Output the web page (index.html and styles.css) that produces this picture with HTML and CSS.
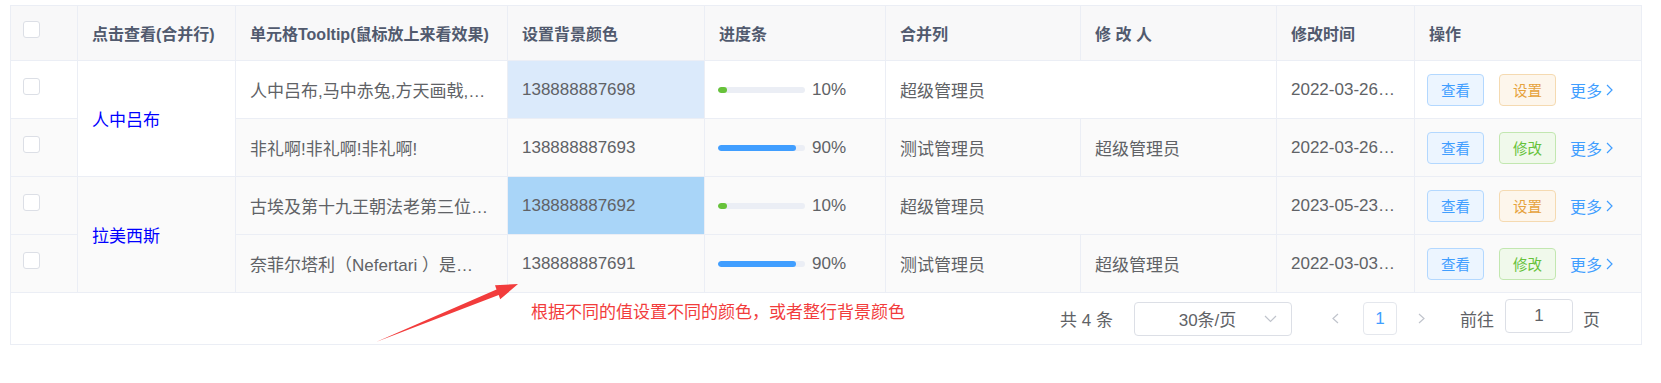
FILE: index.html
```html
<!DOCTYPE html>
<html lang="zh-CN">
<head>
<meta charset="utf-8">
<title>表格示例</title>
<link rel="stylesheet" href="styles.css">
</head>
<body>
<div class="page">
  <div class="panel">
    <table class="grid">
      <colgroup>
        <col class="c-sel"><col class="c-name"><col class="c-tip"><col class="c-bg"><col class="c-prog"><col class="c-merge"><col class="c-editor"><col class="c-time"><col class="c-ops">
      </colgroup>
      <thead>
        <tr>
          <th class="sel"><span class="checkbox"></span></th>
          <th>点击查看(合并行)</th>
          <th>单元格Tooltip(鼠标放上来看效果)</th>
          <th>设置背景颜色</th>
          <th>进度条</th>
          <th>合并列</th>
          <th>修 改 人</th>
          <th>修改时间</th>
          <th>操作</th>
        </tr>
      </thead>
      <tbody>
        <tr class="row-plain">
          <td class="sel"><span class="checkbox"></span></td>
          <td rowspan="2" class="name">人中吕布</td>
          <td><div class="clip">人中吕布,马中赤兔,方天画戟,…</div></td>
          <td class="bg-light">138888887698</td>
          <td class="prog-cell"><div class="progress"><span class="track"><span class="fill fill-green" style="width:10%"></span></span><span class="pct">10%</span></div></td>
          <td colspan="2">超级管理员</td>
          <td><div class="clip">2022-03-26…</div></td>
          <td class="ops-cell"><div class="ops"><span class="btn btn-view">查看</span><span class="btn btn-set">设置</span><span class="more">更多<svg class="chev" width="7" height="12" viewBox="0 0 7 12"><polyline points="1,1 6,6 1,11" fill="none" stroke="#409eff" stroke-width="1.2"/></svg></span></div></td>
        </tr>
        <tr class="row-stripe">
          <td class="sel"><span class="checkbox"></span></td>
          <td><div class="clip">非礼啊!非礼啊!非礼啊!</div></td>
          <td>138888887693</td>
          <td class="prog-cell"><div class="progress"><span class="track"><span class="fill fill-blue" style="width:90%"></span></span><span class="pct">90%</span></div></td>
          <td>测试管理员</td>
          <td>超级管理员</td>
          <td><div class="clip">2022-03-26…</div></td>
          <td class="ops-cell"><div class="ops"><span class="btn btn-view">查看</span><span class="btn btn-edit">修改</span><span class="more">更多<svg class="chev" width="7" height="12" viewBox="0 0 7 12"><polyline points="1,1 6,6 1,11" fill="none" stroke="#409eff" stroke-width="1.2"/></svg></span></div></td>
        </tr>
        <tr class="row-stripe">
          <td class="sel"><span class="checkbox"></span></td>
          <td rowspan="2" class="name">拉美西斯</td>
          <td><div class="clip">古埃及第十九王朝法老第三位…</div></td>
          <td class="bg-strong">138888887692</td>
          <td class="prog-cell"><div class="progress"><span class="track"><span class="fill fill-green" style="width:10%"></span></span><span class="pct">10%</span></div></td>
          <td colspan="2">超级管理员</td>
          <td><div class="clip">2023-05-23…</div></td>
          <td class="ops-cell"><div class="ops"><span class="btn btn-view">查看</span><span class="btn btn-set">设置</span><span class="more">更多<svg class="chev" width="7" height="12" viewBox="0 0 7 12"><polyline points="1,1 6,6 1,11" fill="none" stroke="#409eff" stroke-width="1.2"/></svg></span></div></td>
        </tr>
        <tr class="row-stripe">
          <td class="sel"><span class="checkbox"></span></td>
          <td><div class="clip">奈菲尔塔利（Nefertari ）是…</div></td>
          <td>138888887691</td>
          <td class="prog-cell"><div class="progress"><span class="track"><span class="fill fill-blue" style="width:90%"></span></span><span class="pct">90%</span></div></td>
          <td>测试管理员</td>
          <td>超级管理员</td>
          <td><div class="clip">2022-03-03…</div></td>
          <td class="ops-cell"><div class="ops"><span class="btn btn-view">查看</span><span class="btn btn-edit">修改</span><span class="more">更多<svg class="chev" width="7" height="12" viewBox="0 0 7 12"><polyline points="1,1 6,6 1,11" fill="none" stroke="#409eff" stroke-width="1.2"/></svg></span></div></td>
        </tr>
      </tbody>
    </table>
    <div class="pager">
      <span class="total">共 4 条</span>
      <span class="sizes"><span class="sizes-text">30条/页</span><svg class="sizes-arrow" width="13" height="8" viewBox="0 0 13 8"><polyline points="1,1 6.5,6.5 12,1" fill="none" stroke="#c0c4cc" stroke-width="1.2"/></svg></span>
      <span class="nav-btn nav-prev"><svg width="7" height="11" viewBox="0 0 7 11"><polyline points="6,1 1,5.5 6,10" fill="none" stroke="#c0c4cc" stroke-width="1.2"/></svg></span>
      <span class="page-num">1</span>
      <span class="nav-btn nav-next"><svg width="7" height="11" viewBox="0 0 7 11"><polyline points="1,1 6,5.5 1,10" fill="none" stroke="#c0c4cc" stroke-width="1.2"/></svg></span>
      <span class="jump">前往</span>
      <span class="jump-input">1</span>
      <span class="jump-unit">页</span>
    </div>
  </div>
  <svg class="note-arrow" width="160" height="75" viewBox="0 0 160 75"><polygon points="6,67 128.7,20.1 130.2,24.3 148,9 125,10.3 126.5,14.5" fill="#f23c3c"/></svg>
  <div class="note">根据不同的值设置不同的颜色，或者整行背景颜色</div>
</div>
</body>
</html>
```

FILE: styles.css
```css
* { box-sizing: border-box; }
html, body { background: #fff; }
body {
  margin: 0;
  font-family: "Liberation Sans", "Noto Sans CJK SC", sans-serif;
  color: #606266;
}
.page {
  position: relative;
  padding: 5px 0 0 10px;
}
.panel {
  width: 1632px;
  border: 1px solid #ebeef5;
}
.grid {
  width: 1630px;
  table-layout: fixed;
  border-collapse: separate;
  border-spacing: 0;
}
.c-sel { width: 67px; }
.c-name { width: 158px; }
.c-tip { width: 272px; }
.c-bg { width: 197px; }
.c-prog { width: 181px; }
.c-merge { width: 195px; }
.c-editor { width: 196px; }
.c-time { width: 138px; }
.c-ops { width: 226px; }
.grid th, .grid td {
  border-right: 1px solid #ebeef5;
  border-bottom: 1px solid #ebeef5;
  padding: 0 12px 0 14px;
  text-align: left;
  vertical-align: middle;
  white-space: nowrap;
  overflow: hidden;
}
.grid th:last-child, .grid td:last-child { border-right: 0; }
.grid th {
  height: 55px;
  background: #f8f8f9;
  color: #515a6e;
  font-size: 16px;
  font-weight: bold;
}
.grid td {
  height: 58px;
  font-size: 17px;
}
.row-plain { background: #fff; }
.row-stripe { background: #fafafa; }
.grid .sel { padding-left: 12px; }
.checkbox {
  display: inline-block;
  width: 17px;
  height: 17px;
  border: 1px solid #dcdfe6;
  border-radius: 3px;
  background: #fff;
  vertical-align: middle;
  margin-bottom: 7px;
}
.grid .name { color: #0000ff; }
.clip { overflow: hidden; text-overflow: ellipsis; white-space: nowrap; }
.grid .bg-light { background: #dbeafb; }
.grid .bg-strong { background: #a9d5f8; }
.grid .prog-cell { padding-left: 13px; }
.progress { display: flex; align-items: center; }
.track {
  display: block;
  width: 87px;
  height: 6px;
  border-radius: 3px;
  background: #ebeef5;
  overflow: hidden;
}
.fill { display: block; height: 100%; border-radius: 3px; }
.fill-green { background: #67c23a; }
.fill-blue { background: #409eff; }
.pct { margin-left: 7px; }
.grid .ops-cell { padding-left: 12px; }
.ops { display: flex; align-items: center; }
.btn {
  display: inline-flex;
  align-items: center;
  justify-content: center;
  width: 57px;
  height: 32px;
  border: 1px solid;
  border-radius: 4px;
  font-size: 14.5px;
}
.btn + .btn { margin-left: 15px; }
.btn-view { background: #ecf5ff; border-color: #b3d8ff; color: #409eff; }
.btn-set { background: #fdf6ec; border-color: #f5dab1; color: #e6a23c; }
.btn-edit { background: #f0f9eb; border-color: #c2e7b0; color: #67c23a; }
.more {
  margin-left: 14px;
  display: inline-flex;
  align-items: center;
  color: #409eff;
  font-size: 16px;
}
.chev { margin-left: 4px; }
.pager {
  height: 51px;
  display: flex;
  align-items: center;
  justify-content: flex-end;
  padding-right: 41px;
  font-size: 17px;
  color: #606266;
}
.total { margin-right: 21px; }
.sizes {
  width: 158px;
  height: 34px;
  border: 1px solid #dcdfe6;
  border-radius: 4px;
  display: flex;
  align-items: center;
  padding-right: 14px;
  margin-right: 26px;
}
.sizes-text { flex: 1; text-align: center; padding-left: 16px; }
.sizes-arrow { display: block; }
.nav-btn {
  width: 35px;
  height: 33px;
  display: flex;
  align-items: center;
  justify-content: center;
}
.nav-prev { margin-right: 10px; }
.page-num {
  width: 34px;
  height: 33px;
  border: 1px solid #e4e7ed;
  border-radius: 4px;
  color: #409eff;
  display: flex;
  align-items: center;
  justify-content: center;
  margin-right: 7px;
}
.nav-next { margin-right: 21px; }
.jump { margin-right: 11px; }
.jump-input {
  width: 68px;
  height: 34px;
  border: 1px solid #dcdfe6;
  border-radius: 4px;
  display: flex;
  align-items: center;
  justify-content: center;
  margin-right: 10px;
  margin-bottom: 5px;
}
.note-arrow {
  position: absolute;
  left: 370px;
  top: 275px;
}
.note {
  position: absolute;
  left: 531px;
  top: 298px;
  font-size: 17px;
  color: #f23c3c;
  white-space: nowrap;
}
```
